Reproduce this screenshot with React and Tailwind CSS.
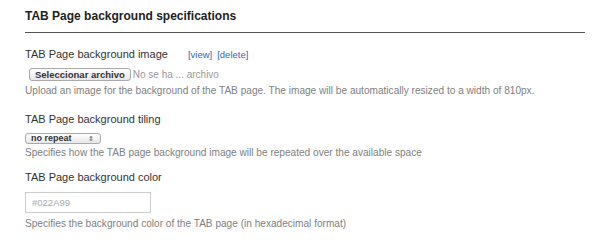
import React from "react";

export default function App() {
  const font = { fontFamily: '"Liberation Sans", Arial, sans-serif' };
  return (
    <div className="w-[610px] h-[239px] bg-white overflow-hidden" style={font}>
      <div className="pl-[25px] pr-[25px] pt-[9px]">
        <div className="text-[12px] font-bold text-[#222] leading-[14px]">
          TAB Page background specifications
        </div>
        <div className="mt-[9px] h-px bg-[#555] w-[560px]"></div>

        <div className="mt-[14px] flex items-baseline">
          <span className="text-[11px] text-[#333] leading-[14px]">TAB Page background image</span>
          <a className="ml-[20px] text-[9.5px] text-[#3366bb]">[view]</a>
          <a className="ml-[5px] text-[9.5px] text-[#3366bb]">[delete]</a>
        </div>

        <div className="mt-[6px] flex items-center">
          <div className="ml-[4px] h-[13px] px-[5px] flex items-center rounded-[3px] border border-[#aaa] bg-gradient-to-b from-[#fff] to-[#e6e6e6] text-[9.5px] font-bold text-[#333] leading-none">
            Seleccionar archivo
          </div>
          <span className="ml-[2px] text-[10px] text-[#999] leading-none">No se ha ... archivo</span>
        </div>
        <div className="mt-[4px] text-[10.1px] text-[#808080] leading-[11px]">
          Upload an image for the background of the TAB page. The image will be automatically resized to a width of 810px.
        </div>

        <div className="mt-[16px] text-[11px] text-[#333] leading-[14px]">TAB Page background tiling</div>
        <div className="mt-[7px] w-[76px] h-[11px] rounded-[3px] border border-[#aaa] bg-gradient-to-b from-[#fff] to-[#e6e6e6] flex items-center justify-between pl-[5px] pr-[6px]">
          <span className="text-[9px] font-bold text-[#333] leading-none">no repeat</span>
          <span className="text-[7px] text-[#555] leading-none">⇕</span>
        </div>
        <div className="mt-[3px] text-[10.1px] text-[#808080] leading-[11px]">
          Specifies how the TAB page background image will be repeated over the available space
        </div>

        <div className="mt-[12px] text-[11px] text-[#333] leading-[14px]">TAB Page background color</div>
        <div className="mt-[8px] w-[126px] h-[21px] border border-[#ccc] flex items-center pl-[6px]">
          <span className="text-[9.5px] text-[#aaa] leading-none">#022A99</span>
        </div>
        <div className="mt-[5px] text-[10.1px] text-[#808080] leading-[11px]">
          Specifies the background color of the TAB page (in hexadecimal format)
        </div>
      </div>
    </div>
  );
}
